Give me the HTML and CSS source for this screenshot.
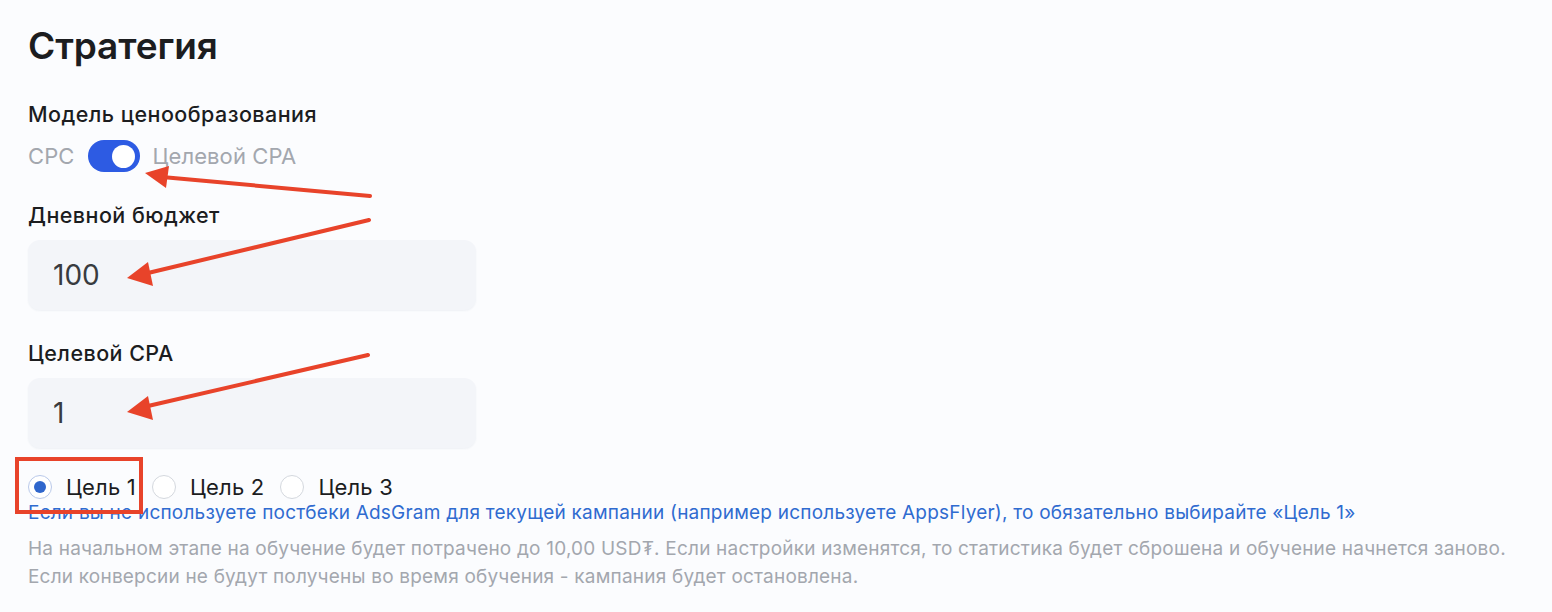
FILE: index.html
```html
<!DOCTYPE html>
<html lang="ru">
<head>
<meta charset="utf-8">
<title>Стратегия</title>
<link rel="stylesheet" href="styles.css">
</head>
<body>
<div class="page">
  <h1 class="title">Стратегия</h1>

  <div class="field field-model">
    <div class="label">Модель ценообразования</div>
    <div class="toggle-row">
      <span class="toggle-text">CPC</span>
      <span class="toggle"><span class="knob"></span></span>
      <span class="toggle-text">Целевой CPA</span>
    </div>
  </div>

  <div class="field field-budget">
    <div class="label">Дневной бюджет</div>
    <div class="input">100</div>
  </div>

  <div class="field field-cpa">
    <div class="label">Целевой CPA</div>
    <div class="input">1</div>
  </div>

  <div class="radios">
    <label class="radio"><span class="circle checked"><span class="dot"></span></span><span class="radio-text">Цель 1</span></label>
    <label class="radio"><span class="circle"></span><span class="radio-text">Цель 2</span></label>
    <label class="radio"><span class="circle"></span><span class="radio-text">Цель 3</span></label>
  </div>
  <p class="note-blue">Если вы не используете постбеки AdsGram для текущей кампании (например используете AppsFlyer), то обязательно выбирайте «Цель 1»</p>
  <p class="note-gray">На начальном этапе на обучение будет потрачено до 10,00 USD₮. Если настройки изменятся, то статистика будет сброшена и обучение начнется заново.<br>Если конверсии не будут получены во время обучения - кампания будет остановлена.</p>

  <svg class="annot" width="1552" height="612" viewBox="0 0 1552 612" xmlns="http://www.w3.org/2000/svg">
    <g stroke="#e8432a" stroke-width="4" stroke-linecap="round" fill="none">
      <line x1="370" y1="196" x2="162" y2="177"/>
      <line x1="369" y1="220" x2="148" y2="273"/>
      <line x1="368" y1="355" x2="148" y2="406"/>
    </g>
    <g fill="#e8432a">
      <polygon points="145,173 169,166 166,188"/>
      <polygon points="127,278 148,262 153,286"/>
      <polygon points="127,412 148,396 153,420"/>
    </g>
    <rect x="17" y="459" width="124" height="53" fill="none" stroke="#e8432a" stroke-width="4"/>
  </svg>
</div>
</body>
</html>
```
FILE: styles.css
```css
html, body {
  margin: 0;
  padding: 0;
  background: #fbfcfe;
}
body {
  font-family: Inter, "Noto Sans", sans-serif;
  color: #1c1d1f;
}
.page {
  position: relative;
  width: 1552px;
  height: 612px;
  box-sizing: border-box;
  padding: 22px 0 0 28px;
  overflow: hidden;
}
.title {
  margin: 0;
  font-size: 37px;
  font-weight: 600;
  line-height: 48px;
  letter-spacing: -0.1px;
}
.field-model {
  margin-top: 29px;
}
.field-budget {
  margin-top: 28px;
}
.field-cpa {
  margin-top: 28px;
}
.label {
  font-size: 21.5px;
  font-weight: 500;
  line-height: 30px;
  letter-spacing: 0.45px;
}
.toggle-row {
  display: flex;
  align-items: center;
  gap: 13px;
  margin-top: 11px;
  height: 32px;
}
.toggle-text {
  font-size: 22px;
  color: #a3a7ae;
  letter-spacing: 0.1px;
}
.toggle {
  width: 52px;
  height: 32px;
  border-radius: 16px;
  background: #2d5be3;
  display: flex;
  align-items: center;
  justify-content: flex-end;
  padding-right: 5px;
  box-sizing: border-box;
}
.knob {
  width: 23px;
  height: 23px;
  border-radius: 50%;
  background: #fff;
}
.input {
  margin-top: 10px;
  width: 448px;
  height: 70px;
  box-sizing: border-box;
  border-radius: 12px;
  background: #f3f5f9;
  box-shadow: 0 1px 2px rgba(40, 60, 110, 0.06);
  padding-left: 25px;
  display: flex;
  align-items: center;
  font-size: 28px;
  color: #383b40;
}
.radios {
  display: flex;
  align-items: center;
  margin-top: 26px;
  height: 26px;
  gap: 16px;
}
.radio {
  display: flex;
  align-items: center;
  gap: 14px;
}
.circle {
  width: 24px;
  height: 24px;
  border-radius: 50%;
  border: 1px solid #d4d8de;
  background: #fff;
  box-sizing: border-box;
  display: flex;
  align-items: center;
  justify-content: center;
}
.circle.checked {
  border-color: #b9c9ea;
}
.dot {
  width: 12px;
  height: 12px;
  border-radius: 50%;
  background: #2f66cc;
}
.radio-text {
  font-size: 22px;
  letter-spacing: 0.2px;
  color: #1c1d1f;
}
.note-blue {
  margin: 0;
  font-size: 19px;
  line-height: 26px;
  letter-spacing: 0.22px;
  color: #2f6bd0;
}
.note-gray {
  margin: 9px 0 0;
  font-size: 19px;
  line-height: 28px;
  letter-spacing: 0.2px;
  color: #a3a7ae;
}
.annot {
  position: absolute;
  left: 0;
  top: 0;
  pointer-events: none;
}
```
